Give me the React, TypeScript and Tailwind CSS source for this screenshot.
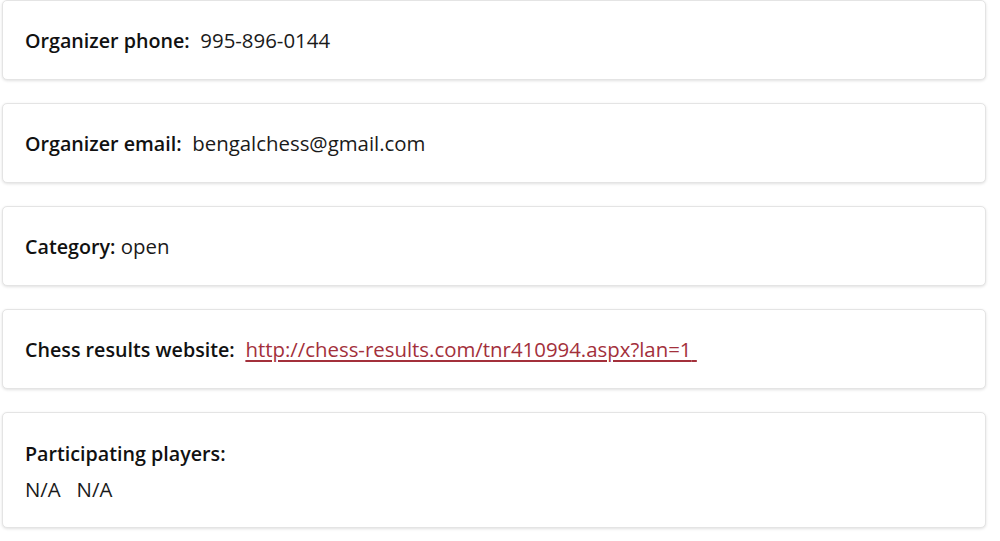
import React from 'react';

const rows: { label: string; value: string; link?: boolean }[] = [
  { label: 'Organizer phone:', value: '995-896-0144' },
  { label: 'Organizer email:', value: 'bengalchess@gmail.com' },
  { label: 'Category:', value: 'open' },
  { label: 'Chess results website:', value: 'http://chess-results.com/tnr410994.aspx?lan=1', link: true },
];

const Card: React.FC<{ children: React.ReactNode; className?: string }> = ({ children, className = '' }) => (
  <div
    className={`bg-white border border-[#e4e4e4] rounded-[5px] shadow-[0_1px_3px_rgba(0,0,0,0.12)] px-[22px] ${className}`}
  >
    {children}
  </div>
);

const App: React.FC = () => {
  return (
    <div
      className="min-h-screen bg-white text-[20.4px] leading-[27px] text-[#1a1a1a]"
      style={{ fontFamily: '"Open Sans", "Noto Sans", sans-serif' }}
    >
      <div className="ml-[2px] w-[984px] flex flex-col gap-[23px]">
        {rows.map((r) => (
          <Card key={r.label} className="h-[80px] flex items-center">
            <p>
              <span className="font-semibold text-[19.7px] text-[#111]">{r.label}</span>
              {r.label === 'Category:' ? ' ' : '\u00a0 '}
              {r.link ? (
                <a href="#" className="text-[#a3303b] underline underline-offset-[3px] decoration-[1.5px]">
                  {r.value}{'\u00a0'}
                </a>
              ) : (
                <span>{r.value}</span>
              )}
            </p>
          </Card>
        ))}
        <Card className="pt-[27px] pb-[24px]">
          <p className="font-semibold text-[19.7px] text-[#111] mb-[9px]">Participating players:</p>
          <p>N/A&nbsp;&nbsp; N/A</p>
        </Card>
      </div>
    </div>
  );
};

export default App;
